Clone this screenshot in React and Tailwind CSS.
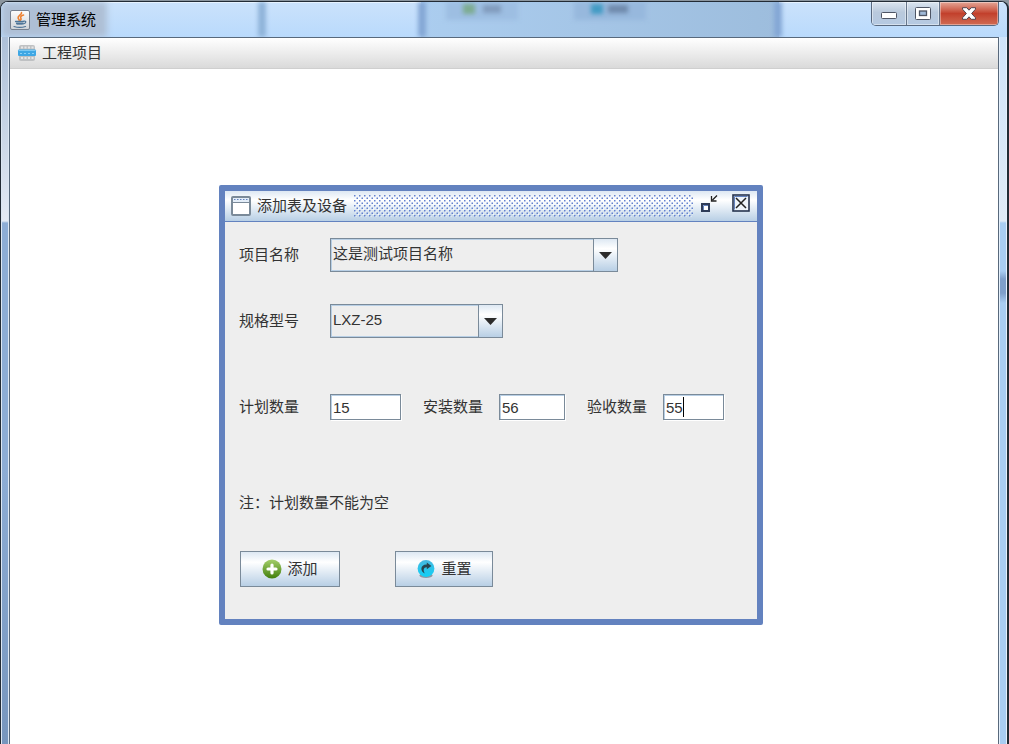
function JavaIcon() {
  return (
    <svg className="size-5 shrink-0" viewBox="0 0 20 20" aria-hidden="true">
      <defs>
        <linearGradient id="javaBg" x1="0" y1="0" x2="0" y2="1">
          <stop offset="0" stopColor="#fdfdfd" />
          <stop offset="1" stopColor="#cfd3d8" />
        </linearGradient>
      </defs>
      <rect x="0.5" y="0.5" width="19" height="19" rx="1.5" fill="url(#javaBg)" stroke="#76808f" />
      <path d="M11.500 2.500c.8 2.200-4.200 3.200-3.400 5.500.3.900 1 1.300 1 2.300M13.500 5c-2.600.8-3.400 2-2.600 3.200.5.700.2 1.400-.5 2" fill="none" stroke="#ee8130" strokeWidth="1.600" strokeLinecap="round" />
      <path d="M5.500 11.400h8.200c-.2 2.400-1.300 3.600-2.200 3.600H8c-1.200 0-2.200-1.200-2.500-3.600z" fill="#8ba5bb" />
      <path d="M5.500 11.400h8M6.500 13.600h6M4 16.500c3 .9 8.500.9 11.500 0M13.800 11.200c2.600-.7 3 2.100-.6 2.700" fill="none" stroke="#4f7598" strokeWidth="1.200" strokeLinecap="round" />
    </svg>
  );
}

function MenuIcon() {
  return (
    <svg className="h-[18px] w-5 shrink-0" viewBox="0 0 20 18" aria-hidden="true">
      <rect x="2" y="1" width="16" height="16" rx="2" fill="#bfc1c3" />
      <path d="M4 3.500h2M7.500 3.500h2M11 3.500h2M14.500 3.500h2M4 14h2M7.500 14h2M11 14h2M14.500 14h2" stroke="#e6e6e6" strokeWidth="2" />
      <rect x="1" y="5.500" width="18" height="6.500" rx="1" fill="#3fa7e4" />
      <path d="M1.500 6.500h17" stroke="#7cc9f3" />
      <path d="M3 9.500h2M7 9.500h2M11 9.500h2M15 9.500h2" stroke="#8dd1f6" />
    </svg>
  );
}

function CaptionButtons() {
  return (
    <div className="flex h-6 overflow-hidden rounded-b-[5px] border border-t-0 border-[#59697f]">
      <button type="button" aria-label="最小化" className="grid w-[35px] place-items-center border-r border-[#66758a] bg-linear-to-b from-[#dbe5f0] via-[#b9c9dc] via-45% to-[#b5c9e2] shadow-[inset_0_0_0_1px_#ffffff70]">
        <svg className="mt-1 h-[7px] w-4" viewBox="0 0 16 7">
          <rect x="0.5" y="0.5" width="15" height="6" rx="1" fill="#fff" stroke="#4e5565" />
        </svg>
      </button>
      <button type="button" aria-label="最大化" className="grid w-[33px] place-items-center border-r border-[#66758a] bg-linear-to-b from-[#dbe5f0] via-[#b9c9dc] via-45% to-[#b5c9e2] shadow-[inset_0_0_0_1px_#ffffff70]">
        <svg className="h-[13px] w-4" viewBox="0 0 16 13">
          <rect x="0.5" y="0.5" width="15" height="12" rx="1" fill="#fff" stroke="#4e5565" />
          <rect x="4.500" y="4" width="7" height="4.500" fill="#9fb9d8" stroke="#4e5565" strokeWidth="1.300" />
        </svg>
      </button>
      <button type="button" aria-label="关闭" className="grid w-[58px] place-items-center bg-linear-to-b from-[#e3a596] via-[#c2402c] via-50% to-[#d06a52] shadow-[inset_0_0_0_1px_#ffffff60]">
        <svg className="h-[13px] w-4" viewBox="0 0 16 13">
          <path d="M1.500.7h4.300L8 3.200 10.200.7h4.300v1.500L10.600 6.500l3.900 4.300v1.500h-4.300L8 9.800l-2.200 2.500H1.500v-1.500l3.900-4.300-3.900-4.300z" fill="#fff" stroke="#55454f" strokeLinejoin="round" />
        </svg>
      </button>
    </div>
  );
}

function Combo({ id, label, value, width }) {
  return (
    <div className="flex items-center">
      <label htmlFor={id} className="w-[91px]">{label}</label>
      <div className={"relative h-[34px] " + width}>
        <select id={id} defaultValue={value} className="block size-full appearance-none border border-[#7a8a99] bg-[#eee] pr-7 pb-[2px] pl-[2px] shadow-[inset_0_0_0_1px_#b8cfe5] outline-none">
          <option>{value}</option>
        </select>
        <span className="pointer-events-none absolute inset-y-0 right-0 grid w-[25px] place-items-center border border-[#7a8a99] bg-linear-to-b from-[#dde8f3] via-white via-30% to-[#b8cfe5]">
          <svg className="h-[7px] w-[13px]" viewBox="0 0 13 7" aria-hidden="true">
            <path d="M0 0h13L6.500 7z" fill="#2b2b2b" />
          </svg>
        </span>
      </div>
    </div>
  );
}

function Quantity({ id, label, value, labelWidth, width, caret }) {
  return (
    <div className="flex items-center">
      <label htmlFor={id} className={labelWidth}>{label}</label>
      <div className="relative">
        <input id={id} defaultValue={value} className={"block h-[26px] border border-[#7a8a99] bg-white pl-[2px] shadow-[1px_1px_0_#fff,inset_1px_1px_0_#b8cfe5] outline-none " + width} />
        {caret && <span className="absolute top-[3px] left-5 h-5 w-px bg-black" />}
      </div>
    </div>
  );
}

function ActionButton({ children, width }) {
  return (
    <button type="button" className={"flex h-9 items-center justify-center gap-[5px] border border-[#7a8a99] bg-linear-to-b from-[#dde8f3] via-white via-30% to-[#b8cfe5] " + width}>
      {children}
    </button>
  );
}

function AddIcon() {
  return (
    <svg className="size-5" viewBox="0 0 20 20" aria-hidden="true">
      <defs>
        <linearGradient id="green" x1="0" y1="0" x2="0" y2="1">
          <stop offset="0" stopColor="#a5cf6c" />
          <stop offset="1" stopColor="#427f0c" />
        </linearGradient>
      </defs>
      <circle cx="10" cy="10" r="9.500" fill="url(#green)" />
      <path d="M10 6v8M6 10h8" stroke="#fff" strokeWidth="3.200" strokeLinecap="round" />
    </svg>
  );
}

function ResetIcon() {
  return (
    <svg className="size-5" viewBox="0 0 20 20" aria-hidden="true">
      <defs>
        <linearGradient id="cyan" x1="0" y1="0" x2="0" y2="1">
          <stop offset="0" stopColor="#48b8e0" />
          <stop offset="1" stopColor="#0fd0f6" />
        </linearGradient>
      </defs>
      <ellipse cx="10" cy="16.500" rx="6.500" ry="2.500" fill="#8a98a5" />
      <circle cx="10" cy="9.500" r="8.400" fill="url(#cyan)" />
      <path d="M8.800 14.500C3.800 12.500 4.200 5.200 10.800 5.500V3.500l4.600 3.500-4.600 3.300V8.300C7.600 8 6.800 11.500 8.800 14.500z" fill="#27444f" />
    </svg>
  );
}

function DialogTitle() {
  return (
    <header className="flex h-[31px] items-center border-b border-[#6382bf] bg-linear-to-b from-[#dde8f3] via-white via-30% to-[#b8cfe5] pr-[7px] pl-[6px]">
      <svg className="size-5 shrink-0" viewBox="0 0 20 20" aria-hidden="true">
        <rect x="1" y="1" width="18" height="18" rx="1" fill="#fff" stroke="#7a8a99" strokeWidth="2" />
        <path d="M2 2h16v4H2z" fill="#e3edf8" />
        <path d="M3 3.500h14" stroke="#6382bf" strokeDasharray="1.500 1.500" />
        <path d="M2 6.500h16" stroke="#7a8a99" />
      </svg>
      <h2 className="ml-[6px] shrink-0">添加表及设备</h2>
      <svg className="mr-[5px] ml-[7px] h-[22px] min-w-0 flex-1" aria-hidden="true">
        <defs>
          <pattern id="bumps" width="5" height="5" patternUnits="userSpaceOnUse">
            <rect x="1.200" y="1.200" width="1.200" height="1.200" fill="#fff" />
            <rect x="3.700" y="3.700" width="1.200" height="1.200" fill="#fff" />
            <rect width="1.500" height="1.500" fill="#6382cf" />
            <rect x="2.500" y="2.500" width="1.500" height="1.500" fill="#6382cf" />
          </pattern>
        </defs>
        <rect width="100%" height="100%" fill="url(#bumps)" />
      </svg>
      <button type="button" aria-label="还原" className="mb-1 shrink-0">
        <svg className="block h-5 w-5" viewBox="0 0 20 20">
          <rect x="4" y="10" width="7" height="7" fill="#fff" stroke="#2e3c58" strokeWidth="2" />
          <path d="M5.500 16v-4.500H10" fill="none" stroke="#6382bf" />
          <path d="M19 1.500l-4.500 4.500M13.500 2v5H18.500" fill="none" stroke="#222" strokeWidth="1.300" />
        </svg>
      </button>
      <button type="button" aria-label="关闭窗口" className="mb-[6px] ml-[14px] shrink-0">
        <svg className="block size-[18px]" viewBox="0 0 18 18">
          <rect x="1" y="1" width="16" height="16" fill="#eef4fa" stroke="#26344f" strokeWidth="1.600" />
          <path d="M2.500 15.500v-13h13" fill="none" stroke="#6382bf" />
          <path d="M4 4l10 10M14 4L4 14" stroke="#222" strokeWidth="1.500" />
        </svg>
      </button>
    </header>
  );
}

function GlassBackdrop() {
  return (
    <div className="pointer-events-none absolute inset-0 overflow-hidden" aria-hidden="true">
      <div className="absolute top-0 left-0 h-full w-[106px] bg-[#aebfd5] blur-[3px]" />
      <div className="absolute top-0 left-[257px] h-full w-2 bg-[#8fb3d9] blur-[2px]" />
      <div className="absolute top-0 left-[420px] h-full w-[358px] bg-linear-to-r from-[#abcdef] to-[#9dbddd]" />
      <div className="absolute top-0 left-[417px] h-full w-2 bg-[#84a7d5] blur-[2px]" />
      <div className="absolute top-0 left-[773px] h-full w-2 bg-[#84a7d5] blur-[2px]" />
      <div className="absolute top-0 left-[445px] h-[18px] w-[72px] bg-[#9dbee2] blur-[2px]" />
      <div className="absolute top-0 left-[573px] h-[18px] w-[72px] bg-[#97b8dd] blur-[2px]" />
      <div className="absolute top-[2px] left-[462px] h-[10px] w-3 bg-[#7dac91] blur-[2px]" />
      <div className="absolute top-[3px] left-[482px] h-2 w-[18px] bg-[#819cbd] blur-[2px]" />
      <div className="absolute top-[2px] left-[590px] h-[10px] w-3 bg-[#429bc4] blur-[2px]" />
      <div className="absolute top-[3px] left-[607px] h-2 w-5 bg-[#6f8aac] blur-[2px]" />
    </div>
  );
}

export default function App() {
  return (
    <div className="bg-[#8c969f] pt-px font-['Liberation_Sans','Noto_Sans_CJK_SC',sans-serif] text-[15px] leading-5 text-[#333]">
      <div className="flex min-h-[calc(100vh-1px)] flex-col overflow-hidden rounded-t-lg border border-r-2 border-b-0 border-[#222b35] bg-[#bddcfc]">
        <div className="relative flex h-[35px] shrink-0 items-start justify-between bg-linear-to-b from-[#cbe2fb] to-[#b9dafc] pr-2 pl-[9px] shadow-[inset_0_1px_0_#e7f3ff]">
          <GlassBackdrop />
          <div className="relative mt-2 flex items-center gap-[6px] text-black">
            <JavaIcon />
            <h1>管理系统</h1>
          </div>
          <div className="relative">
            <CaptionButtons />
          </div>
        </div>
        <div className="flex flex-1">
          <div className="w-2 border-x border-[#dce7f3] bg-[linear-gradient(#adc0d8_0,#e3eaf4_184px,#8dadd5_186px,#8dadd5_430px,#7796bd_100%)]" />
          <div className="flex min-w-0 flex-1 flex-col border border-b-0 border-[#58697c] bg-white">
            <nav className="flex h-[31px] items-center border-b border-[#cfcfcf] bg-linear-to-b from-white to-[#dadada] pb-px pl-[7px]">
              <button type="button" className="flex items-center gap-[5px]">
                <MenuIcon />
                工程项目
              </button>
            </nav>
            <main className="flex-1 pt-[116px] pb-10 pl-[209px]">
              <section className="w-[544px] rounded-[2px] border-[6px] border-[#6382bf] bg-[#eee]">
                <DialogTitle />
                <form className="flex flex-col pt-4 pb-8 pl-[14px]">
                  <Combo id="project" label="项目名称" value="这是测试项目名称" width="w-[288px]" />
                  <div className="mt-8">
                    <Combo id="model" label="规格型号" value="LXZ-25" width="w-[173px]" />
                  </div>
                  <div className="mt-14 flex gap-[22px]">
                    <Quantity id="planned" label="计划数量" value="15" labelWidth="w-[91px]" width="w-[71px]" />
                    <Quantity id="installed" label="安装数量" value="56" labelWidth="w-[76px]" width="w-[66px]" />
                    <Quantity id="accepted" label="验收数量" value="55" labelWidth="w-[76px]" width="w-[61px]" caret />
                  </div>
                  <p className="mt-[73px]">注：计划数量不能为空</p>
                  <div className="mt-[38px] flex gap-[55px] pl-px">
                    <ActionButton width="w-[100px]">
                      <AddIcon />
                      添加
                    </ActionButton>
                    <ActionButton width="w-[98px]">
                      <ResetIcon />
                      重置
                    </ActionButton>
                  </div>
                </form>
              </section>
            </main>
          </div>
          <div className="w-2 border-x border-[#e4f0fc] bg-[linear-gradient(#cfe4fb_0,#dfeaf6_184px,#a9cdf2_186px,#a9cdf2_234px,#7f9fca_242px,#7f9fca_256px,#a9cdf2_266px,#a9cdf2_100%)]" />
        </div>
      </div>
    </div>
  );
}
